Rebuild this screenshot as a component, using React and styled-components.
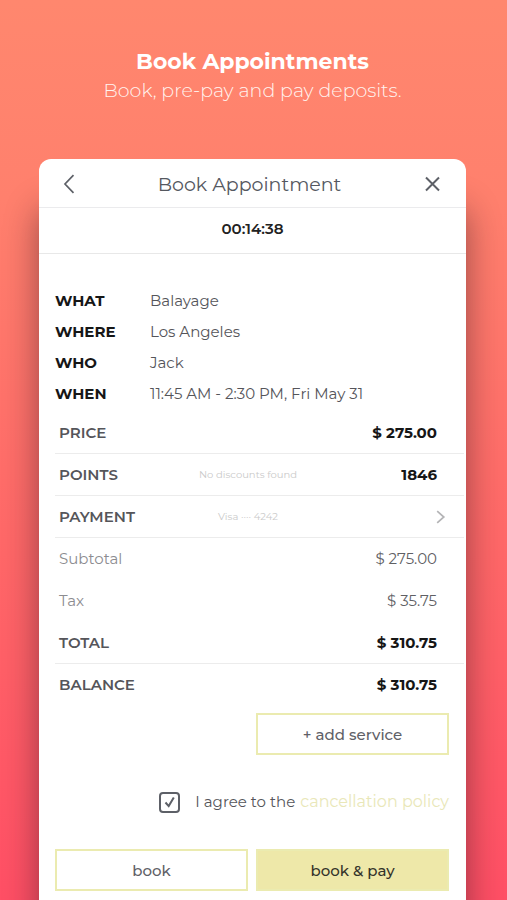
import React, { useState } from "react";
import styled, { createGlobalStyle } from "styled-components";

const GlobalStyle = createGlobalStyle`
    * {
        box-sizing: border-box;
    }
    body {
        margin: 0;
        font-family: Montserrat, Inter, "Liberation Sans", sans-serif;
        font-size: 15px;
        color: #55555a;
    }
    button {
        font-family: inherit;
        cursor: pointer;
    }
`;

const Page = styled.div`
    min-height: 100vh;
    display: flex;
    flex-direction: column;
    padding: 48px 41px 0 39px;
    overflow: hidden;
    background: linear-gradient(#ff876e 0%, #ff806d 22%, #ff6868 60%, #ff4f65 100%);
`;

const Hero = styled.header`
    padding-bottom: 53px;
    text-align: center;
    color: #fff;
`;

const HeroTitle = styled.h1`
    margin: 0;
    font-size: 22px;
    font-weight: 700;
    line-height: 28px;
`;

const HeroText = styled.p`
    margin: 0;
    font-size: 19px;
    font-weight: 300;
    line-height: 30px;
    color: #fff4f0;
`;

const Card = styled.main`
    flex: 1;
    padding-bottom: 9px;
    border-radius: 12px 12px 0 0;
    background: #fff;
    box-shadow: 0 50px 34px rgba(40, 20, 30, 0.48);
`;

const CardHeader = styled.div`
    height: 49px;
    display: flex;
    align-items: center;
    justify-content: space-between;
    padding: 2px 24px 0;
    border-bottom: 1px solid #ebebed;
`;

const CardTitle = styled.h2`
    margin: 0;
    font-size: 19px;
    font-weight: 400;
    color: #55585f;
`;

const IconButton = styled.button`
    display: flex;
    padding: 0;
    border: none;
    background: none;
    color: #5d6067;
`;

const Timer = styled.div`
    height: 46px;
    padding-top: 8px;
    border-bottom: 1px solid #e8e8e8;
    text-align: center;
    font-weight: 600;
    line-height: 26px;
    color: #222;
`;

const Details = styled.dl`
    margin: 0;
    padding: 31px 16px 3px;
    display: grid;
    grid-template-columns: 95px 1fr;
    line-height: 31px;
`;

const Term = styled.dt`
    font-weight: 700;
    color: #161616;
`;

const Description = styled.dd`
    margin: 0;
    font-weight: 400;
`;

const Ledger = styled.dl`
    margin: 0 2px 7px 16px;
`;

const LedgerRow = styled.div`
    height: 42px;
    display: grid;
    grid-template-columns: 1fr auto 1fr;
    align-items: center;
    padding: 0 27px 0 4px;
    border-bottom: 1px solid ${(props) => (props.$line ? "#ececec" : "transparent")};
`;

const LedgerLabel = styled.dt`
    font-weight: ${(props) => (props.$light ? 400 : 600)};
    color: ${(props) => (props.$light ? "#8c8c90" : "#55555a")};
`;

const Note = styled.dd`
    margin: 0;
    font-size: 10px;
    font-weight: 400;
    color: #cacaca;
`;

const Amount = styled.dd`
    grid-column: 3;
    justify-self: end;
    margin: 0;
    font-weight: ${(props) => (props.$light ? 400 : 700)};
    color: ${(props) => (props.$light ? "#606064" : "#161616")};
`;

const MoreButton = styled(IconButton)`
    margin-right: -9px;
    color: #b4b4b6;
`;

const Actions = styled.div`
    display: grid;
    grid-template-columns: 1fr 1fr;
    gap: 8px;
    padding: 0 17px 0 16px;
`;

const ActionButton = styled.button`
    grid-column: ${(props) => (props.$last ? 2 : "auto")};
    height: 42px;
    padding: 0;
    border: 2px solid #ebebb0;
    background: ${(props) => (props.$filled ? "#eee8a9" : "#fff")};
    font-size: 15px;
    font-weight: 500;
    color: ${(props) => (props.$filled ? "#33332a" : "#5f6167")};
`;

const Agreement = styled.div`
    display: flex;
    align-items: center;
    justify-content: flex-end;
    padding: 36px 17px;
    line-height: 22px;
`;

const AgreeLabel = styled.label`
    display: flex;
    align-items: center;
    gap: 15px;
    cursor: pointer;
`;

const CheckWrap = styled.span`
    position: relative;
    display: flex;
`;

const Checkbox = styled.input`
    appearance: none;
    width: 21px;
    height: 21px;
    margin: 0;
    border: 2px solid #5d6067;
    border-radius: 4px;
    cursor: pointer;
`;

const CheckMark = styled.svg`
    position: absolute;
    inset: 0;
    pointer-events: none;
`;

const PolicyLink = styled.a`
    margin-left: 5px;
    font-size: 16px;
    color: #e9e7b8;
    text-decoration: none;
`;

const details = [
    { term: "WHAT", text: "Balayage" },
    { term: "WHERE", text: "Los Angeles" },
    { term: "WHO", text: "Jack" },
    { term: "WHEN", text: "11:45 AM - 2:30 PM, Fri May 31" },
];

const ledger = [
    { label: "PRICE", amount: "$ 275.00", line: true },
    { label: "POINTS", note: "No discounts found", amount: "1846", line: true },
    { label: "PAYMENT", note: "Visa ···· 4242", line: true },
    { label: "Subtotal", amount: "$ 275.00", light: true },
    { label: "Tax", amount: "$ 35.75", light: true },
    { label: "TOTAL", amount: "$ 310.75", line: true },
    { label: "BALANCE", amount: "$ 310.75" },
];

const BackIcon = () => (
    <svg width="12" height="20" viewBox="0 0 12 20" fill="none" stroke="currentColor" strokeWidth="1.7">
        <path d="M10.5 1.2L2 10l8.5 8.8" />
    </svg>
);

const CloseIcon = () => (
    <svg width="18" height="18" viewBox="0 0 18 18" fill="none" stroke="currentColor" strokeWidth="2">
        <path d="M2 2.5l13 13M15 2.5l-13 13" />
    </svg>
);

const MoreIcon = () => (
    <svg width="10" height="14" viewBox="0 0 10 14" fill="none" stroke="currentColor" strokeWidth="1.7">
        <path d="M1.2 1.2L7.8 7l-6.6 5.8" />
    </svg>
);

export default () => {
    const [agreed, setAgreed] = useState(true);

    return (
        <>
            <GlobalStyle />
            <Page>
                <Hero>
                    <HeroTitle>Book Appointments</HeroTitle>
                    <HeroText>Book, pre-pay and pay deposits.</HeroText>
                </Hero>
                <Card>
                    <CardHeader>
                        <IconButton aria-label="Back">
                            <BackIcon />
                        </IconButton>
                        <CardTitle>Book Appointment</CardTitle>
                        <IconButton aria-label="Close">
                            <CloseIcon />
                        </IconButton>
                    </CardHeader>
                    <Timer>00:14:38</Timer>
                    <Details>
                        {details.map(({ term, text }) => (
                            <React.Fragment key={term}>
                                <Term>{term}</Term>
                                <Description>{text}</Description>
                            </React.Fragment>
                        ))}
                    </Details>
                    <Ledger>
                        {ledger.map(({ label, note, amount, line, light }) => (
                            <LedgerRow key={label} $line={line}>
                                <LedgerLabel $light={light}>{label}</LedgerLabel>
                                {note && <Note>{note}</Note>}
                                <Amount $light={light}>
                                    {amount || (
                                        <MoreButton aria-label="Change payment">
                                            <MoreIcon />
                                        </MoreButton>
                                    )}
                                </Amount>
                            </LedgerRow>
                        ))}
                    </Ledger>
                    <Actions>
                        <ActionButton $last>+ add service</ActionButton>
                    </Actions>
                    <Agreement>
                        <AgreeLabel>
                            <CheckWrap>
                                <Checkbox type="checkbox" checked={agreed} onChange={() => setAgreed(!agreed)} />
                                {agreed && (
                                    <CheckMark width="21" height="21" viewBox="0 0 21 21" fill="none" stroke="#5d6067" strokeWidth="2">
                                        <path d="M6.5 10.5l3.2 3.6L14.8 5.5" />
                                    </CheckMark>
                                )}
                            </CheckWrap>
                            I agree to the
                        </AgreeLabel>
                        <PolicyLink href="#policy">cancellation policy</PolicyLink>
                    </Agreement>
                    <Actions>
                        <ActionButton>book</ActionButton>
                        <ActionButton $filled>book &amp; pay</ActionButton>
                    </Actions>
                </Card>
            </Page>
        </>
    );
};
